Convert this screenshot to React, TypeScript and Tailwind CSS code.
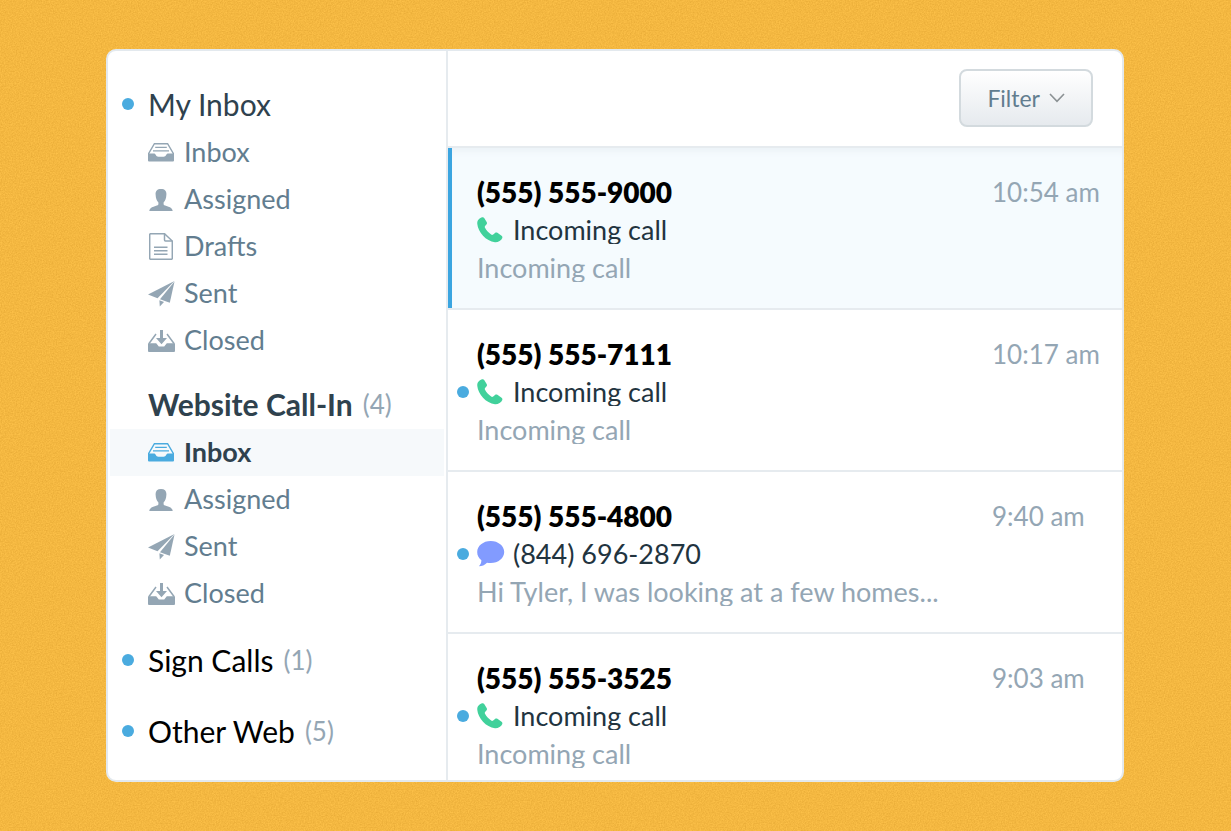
import type { ReactNode } from 'react';

const InboxIcon = () => (
  <svg width="26" height="19" viewBox="0 0 26 19" fill="none" stroke="currentColor" aria-hidden="true">
    <path d="M0.7 11V10.400L6.400.7H19.600L25.300 10.400V11" strokeWidth="1.400" />
    <path d="M7.200 4.400H18.800M5 7.800H21" strokeWidth="1.300" />
    <path d="M0 10.600H6.400C7.600 10.600 7.800 13.800 10.400 13.800H15.600C18.200 13.800 18.400 10.600 19.600 10.600H26V17.400Q26 18.400 25 18.400H1Q0 18.400 0 17.400Z" fill="currentColor" stroke="none" />
  </svg>
);

const PersonIcon = () => (
  <svg width="24" height="22" viewBox="0 0 24 22" fill="currentColor" aria-hidden="true">
    <path d="M12 0C15.800 0 17.600 2 17.400 5.600C17.200 9.400 16.400 12 14.600 13.600V15C14.600 16 15.400 16.400 17.500 17C21.500 18.200 23.300 19.200 23.700 22H.3C.7 19.200 2.500 18.200 6.500 17C8.600 16.400 9.400 16 9.400 15V13.600C7.600 12 6.800 9.400 6.600 5.600C6.400 2 8.200 0 12 0Z" />
  </svg>
);

const DraftIcon = () => (
  <svg width="24" height="27" viewBox="0 0 24 27" fill="none" stroke="currentColor" strokeWidth="1.500" aria-hidden="true">
    <path d="M15.500.7H1.700Q.7.7.7 1.700V25.300Q.7 26.300 1.700 26.300H22.300Q23.300 26.300 23.300 25.300V8Z" />
    <path d="M15.500.7V7Q15.500 8 16.500 8H23.300M5 14.200H18.500M5 17.700H18.500M5 21.200H18.500" />
  </svg>
);

const SentIcon = () => (
  <svg width="27" height="26" viewBox="0 0 27 26" fill="currentColor" aria-hidden="true">
    <path d="M0 13.500 26.500 0 9.500 17.300Z" />
    <path d="M26.500.500 21.800 21.700 12 18.200Z" />
    <path d="M11.400 19.300 16 21 11.800 25.600Z" />
  </svg>
);

const ClosedIcon = () => (
  <svg width="27" height="22" viewBox="0 0 27 22" fill="currentColor" aria-hidden="true">
    <path d="M12 0H15V8H19L13.500 14.200 8 8H12Z" />
    <path d="M8 4 1 13.500M19 4 26 13.500" stroke="currentColor" strokeWidth="1.500" />
    <path d="M0 13.200H8.200L10.800 16.600H16.200L18.800 13.200H27V21Q27 22 26 22H1Q0 22 0 21Z" />
  </svg>
);

const PhoneIcon = () => (
  <svg width="26" height="26" viewBox="0 0 26 26" fill="#41d19b" aria-hidden="true">
    <path d="M5 .3C2 1.500 0 3.500.3 7C1 15 9 24.300 18 25.200C21 25.400 24.300 23.500 25.300 21C25.600 20.200 25.300 19.400 24.600 18.800L20.400 15.800C19.600 15.300 18.700 15.300 18 15.900L16.200 17.500C15.500 18 14.800 18 14.200 17.600C11.600 15.800 9.400 13.400 8 10.800C7.600 10 7.700 9.400 8.300 8.800L9.600 7.300C10.100 6.700 10.200 6 9.800 5.300L7.200 1C6.700.2 5.900 0 5 .3Z" />
  </svg>
);

const ChatIcon = () => (
  <svg width="28" height="26" viewBox="0 0 28 26" fill="#829bff" aria-hidden="true">
    <path d="M13.700 0C21.300 0 27.200 4.900 27.200 11.100C27.200 17.300 21.300 22.100 13.700 22.100C12.400 22.100 11.200 22 10 21.700C7.700 24 5 25.200 1.900 25.300C3.400 23.900 4.300 22 4.400 19.300C1.600 17.200.2 14.500.2 11.100C.2 4.900 6.100 0 13.700 0Z" />
  </svg>
);

const Dot = () => <span className="w-3 h-3 shrink-0 rounded-full bg-[#4aabdf]" />;

type Folder = { name: string; icon: () => ReactNode; active?: boolean };

type Group = {
  name: string;
  count?: number;
  unread?: boolean;
  headingClass: string;
  folders: Folder[];
};

const groups: Group[] = [
  {
    name: 'My Inbox',
    unread: true,
    headingClass: 'text-[#2f424e] leading-[32px] overflow-hidden',
    folders: [
      { name: 'Inbox', icon: InboxIcon },
      { name: 'Assigned', icon: PersonIcon },
      { name: 'Drafts', icon: DraftIcon },
      { name: 'Sent', icon: SentIcon },
      { name: 'Closed', icon: ClosedIcon }
    ]
  },
  {
    name: 'Website Call-In',
    count: 4,
    headingClass: 'text-[#2f424e] font-bold',
    folders: [
      { name: 'Inbox', icon: InboxIcon, active: true },
      { name: 'Assigned', icon: PersonIcon },
      { name: 'Sent', icon: SentIcon },
      { name: 'Closed', icon: ClosedIcon }
    ]
  },
  { name: 'Sign Calls', count: 1, unread: true, headingClass: 'text-black', folders: [] },
  { name: 'Other Web', count: 5, unread: true, headingClass: 'text-black', folders: [] }
];

const messages = [
  { from: '(555) 555-9000', time: '10:54 am', icon: PhoneIcon, subject: 'Incoming call', preview: 'Incoming call', active: true },
  { from: '(555) 555-7111', time: '10:17 am', icon: PhoneIcon, subject: 'Incoming call', preview: 'Incoming call', unread: true },
  { from: '(555) 555-4800', time: '9:40 am', icon: ChatIcon, subject: '(844) 696-2870', preview: 'Hi Tyler, I was looking at a few homes...', unread: true },
  { from: '(555) 555-3525', time: '9:03 am', icon: PhoneIcon, subject: 'Incoming call', preview: 'Incoming call', unread: true }
];

const Sidebar = () => (
  <nav className="w-[340px] shrink-0 border-r-2 border-[#e6ebef] pt-[30px] flex flex-col gap-[17px]">
    {groups.map((group) => (
      <section key={group.name} className={group.folders.length > 0 ? '' : 'py-[3px]'}>
        <h2 className="h-12 pl-[14px] pb-[2px] flex items-center gap-[14px] text-[30px]">
          {group.unread ? <Dot /> : <span className="w-3" />}
          <a href="#" className="flex items-center gap-[10px]">
            <span className={group.headingClass}>{group.name}</span>
            {group.count && <span className="text-[26px] text-[#94a6b4]">({group.count})</span>}
          </a>
        </h2>
        {group.folders.length > 0 && (
          <ul>
            {group.folders.map((folder) => {
              const Icon = folder.icon;
              return (
                <li key={folder.name}>
                  <a
                    href="#"
                    className={`h-[47px] mx-[2px] pl-[37px] flex items-center gap-[9px] text-[27px] ${
                      folder.active ? 'bg-[#f6f9fb] font-bold text-[#2f424e]' : 'text-[#627d8f]'
                    }`}
                  >
                    <span className={`w-[28px] flex justify-center ${folder.active ? 'text-[#4aabdf]' : 'text-[#94a6b4]'}`}>
                      <Icon />
                    </span>
                    {folder.name}
                  </a>
                </li>
              );
            })}
          </ul>
        )}
      </section>
    ))}
  </nav>
);

const MessageList = () => (
  <ul>
    {messages.map((message) => {
      const Icon = message.icon;
      return (
        <li key={message.from} className="group border-b-2 border-[#e6ebef] last:border-b-0">
          <a
            href="#"
            className={`grid grid-cols-[12px_1fr_130px] gap-x-2 items-center pt-[25px] pb-[21px] group-last:pb-[7px] text-[27px] leading-[38px] ${
              message.active
                ? 'pl-[5px] border-l-4 border-[#3ba5e0] bg-[#f5fbfe] shadow-[inset_0_8px_8px_-6px_#e9eff5]'
                : 'pl-[9px]'
            }`}
          >
            <span className="col-start-2 text-[28px] font-extrabold text-black">{message.from}</span>
            <time className="text-[26px] text-[#94a6b4]">{message.time}</time>
            <span className="col-start-1 flex">{message.unread && <Dot />}</span>
            <span className="col-span-2 h-[38px] flex items-center gap-[8px] text-[#22343f]">
              <span className="w-[28px]">
                <Icon />
              </span>
              <span className="leading-[28px] truncate">{message.subject}</span>
            </span>
            <span className="col-start-2 col-span-2 h-[38px] flex items-center text-[#94a6b4]">
              <span className="leading-[28px] truncate">{message.preview}</span>
            </span>
          </a>
        </li>
      );
    })}
  </ul>
);

const Grain = () => (
  <svg className="absolute inset-0 w-full h-full" aria-hidden="true">
    <filter id="grain" x="0" y="0" width="100%" height="100%" colorInterpolationFilters="sRGB">
      <feTurbulence type="fractalNoise" baseFrequency="0.73" numOctaves="2" />
      <feColorMatrix values="0 0 0 0 0.86  0 0 0 0 0.62  0 0 0 0 0.17  0.9 0 0 0 -0.2" />
    </filter>
    <rect width="100%" height="100%" filter="url(#grain)" />
  </svg>
);

const App = () => {
  return (
    <div className="relative min-h-screen bg-[#fcc048] pl-[106px] pr-[107px] py-[49px] font-['Lato',sans-serif]">
      <Grain />
      <main className="relative flex bg-white border-2 border-[#e3e9ee] rounded-[10px] overflow-hidden">
        <Sidebar />
        <div className="flex-1 min-w-0">
          <header className="flex justify-end pt-[18px] pb-[19px] pr-[29px] border-b-2 border-[#e6ebef]">
            <button
              type="button"
              className="h-[58px] px-[26px] flex items-center gap-[9px] rounded-lg border-2 border-[#d3dade] bg-linear-to-b from-white to-[#e6eaee] text-[23px] text-[#627d8f]"
            >
              Filter
              <svg width="16" height="10" viewBox="0 0 16 10" fill="none" stroke="#8b9194" strokeWidth="1.600" aria-hidden="true">
                <path d="M1 1 8 8.300 15 1" />
              </svg>
            </button>
          </header>
          <MessageList />
        </div>
      </main>
    </div>
  );
};

export default App;
